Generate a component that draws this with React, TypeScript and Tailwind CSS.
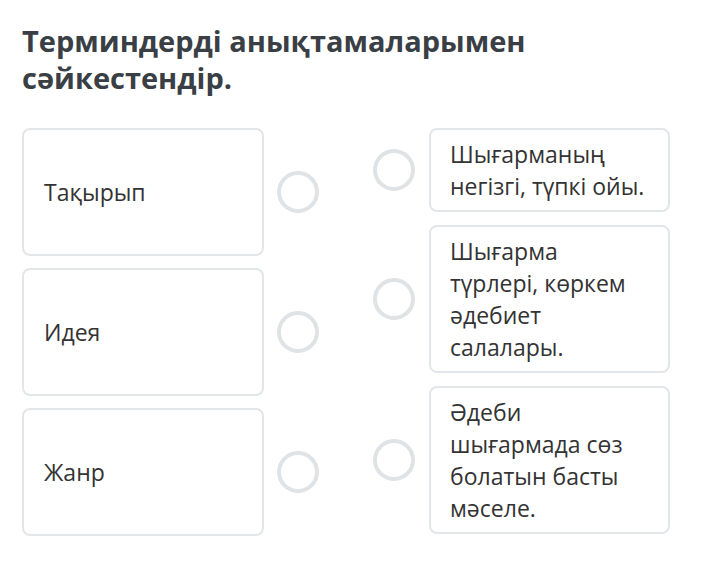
import React from 'react';

const terms = ['Тақырып', 'Идея', 'Жанр'];

const definitions = [
  'Шығарманың негізгі, түпкі ойы.',
  'Шығарма түрлері, көркем әдебиет салалары.',
  'Әдеби шығармада сөз болатын басты мәселе.',
];

const Dot: React.FC = () => (
  <div className="w-[42px] h-[42px] shrink-0 rounded-full border-[4px] border-[#dfe3e6] bg-white" />
);

const App: React.FC = () => {
  return (
    <div className="w-[706px] h-[573px] bg-white text-[#333] font-['Open_Sans',sans-serif] overflow-hidden">
      <div className="px-[22px] pt-[22px]">
        <h1 className="text-[29px] leading-[37px] font-bold text-[#3a3f46]">
          Терминдерді анықтамаларымен
          <br />
          сәйкестендір.
        </h1>

        <div className="flex mt-[32px] gap-[54px]">
          {/* Terms */}
          <div className="flex flex-col gap-[12px]">
            {terms.map((t) => (
              <div key={t} className="flex items-center gap-[13px]">
                <div className="w-[242px] h-[128px] flex items-center px-[20px] rounded-[8px] border-2 border-[#e3e6e9] text-[23px]">
                  {t}
                </div>
                <Dot />
              </div>
            ))}
          </div>

          {/* Definitions */}
          <div className="flex flex-col gap-[13px]">
            {definitions.map((d) => (
              <div key={d} className="flex items-center gap-[14px]">
                <Dot />
                <div className="w-[241px] py-[8px] pl-[19px] rounded-[8px] border-2 border-[#e3e6e9] text-[23px] leading-[32px]">
                  <p className="w-[197px]">{d}</p>
                </div>
              </div>
            ))}
          </div>
        </div>
      </div>
    </div>
  );
};

export default App;
